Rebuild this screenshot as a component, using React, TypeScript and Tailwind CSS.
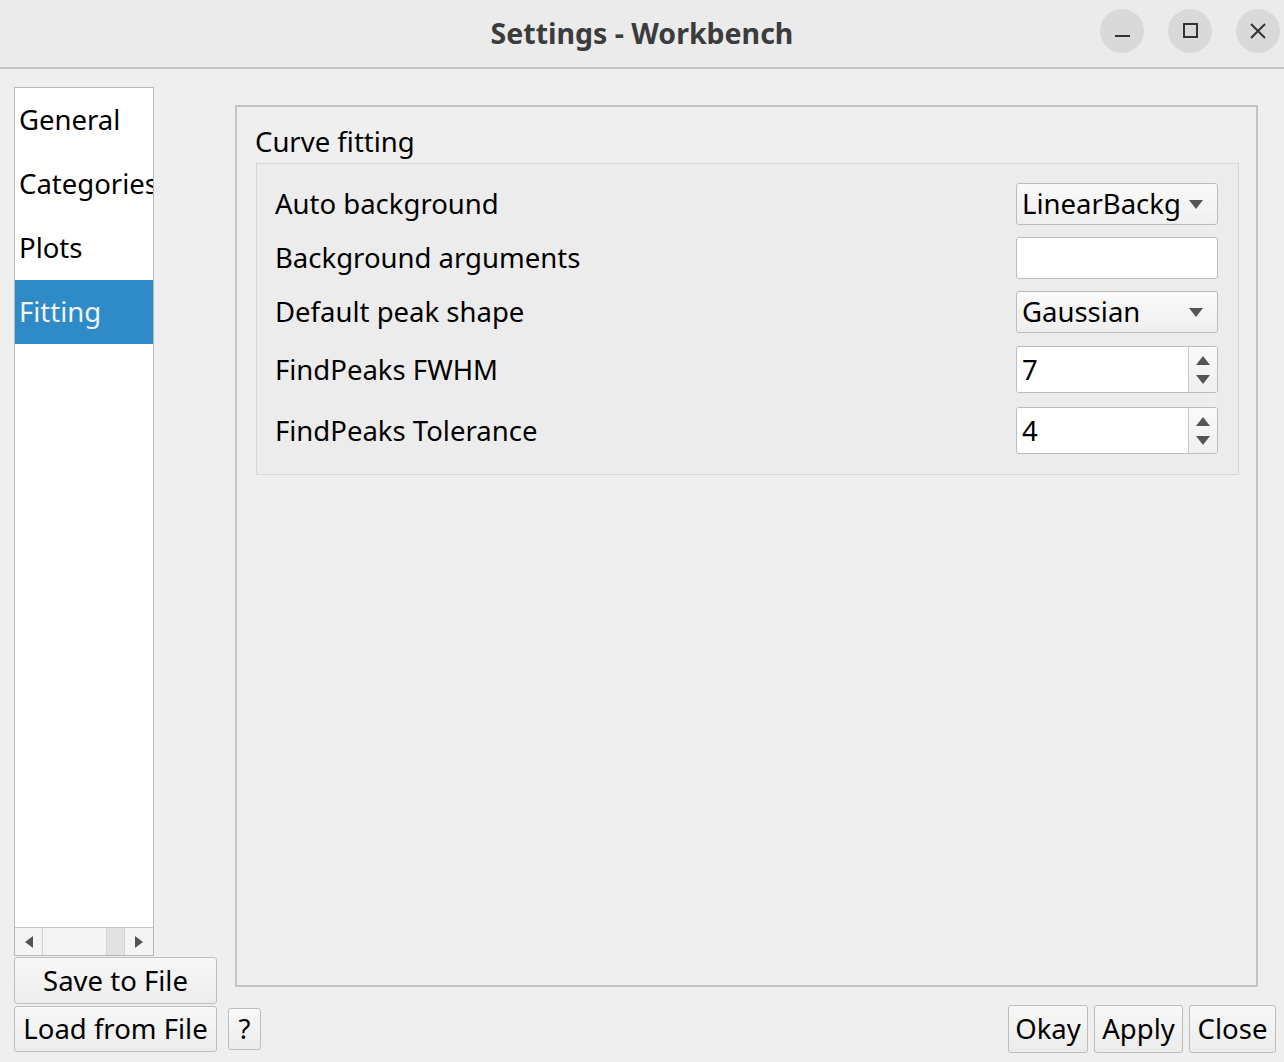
import { ReactNode } from 'react'

const FONT = { fontFamily: '"Noto Sans", "DejaVu Sans", sans-serif' }

function Btn({ children, className }: { children: ReactNode; className: string }) {
  return (
    <button
      className={`flex items-center justify-center rounded-[3px] border border-[#bdbdbd] bg-gradient-to-b from-[#f8f8f8] to-[#ececec] text-[27.5px] leading-none text-black ${className}`}
    >
      {children}
    </button>
  )
}

function Arrow({ up, className }: { up?: boolean; className?: string }) {
  return (
    <svg width="14" height="9" viewBox="0 0 14 9" className={className}>
      <path d={up ? 'M0 9 L7 0 L14 9 Z' : 'M0 0 L14 0 L7 9 Z'} fill="#555" />
    </svg>
  )
}

function Combo({ value }: { value: string }) {
  return (
    <div className="flex h-[42px] w-[202px] items-center overflow-hidden rounded-[3px] border border-[#bdbdbd] bg-gradient-to-b from-[#fafafa] to-[#efefef] pl-[5px] pr-[14px]">
      <span className="mr-[8px] flex-1 overflow-hidden whitespace-nowrap text-[27.5px] text-black">{value}</span>
      <Arrow className="shrink-0" />
    </div>
  )
}

function Spin({ value }: { value: string }) {
  return (
    <div className="flex h-[47px] w-[202px] overflow-hidden rounded-[3px] border border-[#bdbdbd] bg-white">
      <span className="flex flex-1 items-center pl-[5px] text-[27.5px] text-black">{value}</span>
      <div className="flex w-[29px] flex-col items-center justify-center gap-[10px] border-l border-[#c8c8c8] bg-gradient-to-b from-[#fafafa] to-[#efefef]">
        <Arrow up />
        <Arrow />
      </div>
    </div>
  )
}

function Row({ label, children }: { label: string; children: ReactNode }) {
  return (
    <div className="flex items-center justify-between">
      <span className="text-[27.5px] text-black">{label}</span>
      {children}
    </div>
  )
}

export default function App() {
  const items = ['General', 'Categories', 'Plots', 'Fitting']
  return (
    <div className="flex h-[1062px] w-[1284px] flex-col overflow-hidden bg-[#efefef]" style={FONT}>
      {/* title bar */}
      <div className="grid h-[69px] grid-cols-[1fr_auto_1fr] items-center border-b-2 border-[#c6c6c6] bg-[#ebebeb]">
        <div />
        <div className="text-[28.5px] font-bold text-[#3c3c3c]">Settings - Workbench</div>
        <div className="flex justify-end gap-[24px] pb-[6px] pr-[4px]">
          <div className="flex h-[44px] w-[44px] items-center justify-center rounded-full bg-[#d9d9d9]">
            <div className="mt-[10px] h-[2px] w-[15px] bg-[#333]" />
          </div>
          <div className="flex h-[44px] w-[44px] items-center justify-center rounded-full bg-[#d9d9d9]">
            <div className="h-[15px] w-[15px] border-2 border-[#333]" />
          </div>
          <div className="flex h-[44px] w-[44px] items-center justify-center rounded-full bg-[#d9d9d9]">
            <svg width="16" height="16" viewBox="0 0 16 16">
              <path d="M1 1 L15 15 M15 1 L1 15" stroke="#333" strokeWidth="2" />
            </svg>
          </div>
        </div>
      </div>

      <div className="flex pl-[14px]">
        {/* left column */}
        <div className="flex w-[203px] flex-col pt-[18px]">
          <div className="flex h-[869px] w-[140px] flex-col border border-[#b8b8b8] bg-white">
            <div className="flex-1 overflow-hidden">
              {items.map((it) => (
                <div
                  key={it}
                  className={`flex h-[64px] items-center whitespace-nowrap pl-[4px] text-[27.5px] ${
                    it === 'Fitting' ? 'bg-[#2f8bc7] text-[#eef4fa]' : 'text-black'
                  }`}
                >
                  {it}
                </div>
              ))}
            </div>
            <div className="flex h-[28px] border-t border-[#c8c8c8] bg-[#f4f4f4]">
              <div className="flex w-[28px] items-center justify-center border-r border-[#d0d0d0]">
                <svg width="8" height="12" viewBox="0 0 8 12">
                  <path d="M8 0 L0 6 L8 12 Z" fill="#555" />
                </svg>
              </div>
              <div className="flex-1" />
              <div className="w-[19px] border-x border-[#d4d4d4] bg-[#e2e2e2]" />
              <div className="flex w-[28px] items-center justify-center">
                <svg width="8" height="12" viewBox="0 0 8 12">
                  <path d="M0 0 L8 6 L0 12 Z" fill="#555" />
                </svg>
              </div>
            </div>
          </div>
          <Btn className="mt-px h-[47px] w-[203px]">Save to File</Btn>
        </div>

        {/* settings panel */}
        <div className="ml-[18px] mt-[36px] flex h-[882px] w-[1023px] flex-col border-2 border-[#c4c4c4] pl-[18px] pr-[17px]">
          <div className="pt-[18px] text-[27.5px] leading-[34px] text-black">Curve fitting</div>
          <div className="ml-px mt-[4px] flex flex-col border border-[#d6d6d6] bg-[#ececec] pb-[20px] pl-[18px] pr-[20px] pt-[19px]">
            <Row label="Auto background">
              <Combo value="LinearBackground" />
            </Row>
            <div className="mt-[12px]">
              <Row label="Background arguments">
                <div className="h-[42px] w-[202px] rounded-[3px] border border-[#bdbdbd] bg-white" />
              </Row>
            </div>
            <div className="mt-[12px]">
              <Row label="Default peak shape">
                <Combo value="Gaussian" />
              </Row>
            </div>
            <div className="mt-[13px]">
              <Row label="FindPeaks FWHM">
                <Spin value="7" />
              </Row>
            </div>
            <div className="mt-[14px]">
              <Row label="FindPeaks Tolerance">
                <Spin value="4" />
              </Row>
            </div>
          </div>
        </div>
      </div>

      {/* bottom row */}
      <div className="mt-[1px] flex items-center pl-[14px] pr-[8px]">
        <Btn className="h-[46px] w-[203px]">Load from File</Btn>
        <Btn className="ml-[11px] h-[42px] w-[33px]">?</Btn>
        <div className="flex-1" />
        <div className="flex gap-[6px]">
          <Btn className="h-[48px] w-[80px]">Okay</Btn>
          <Btn className="h-[48px] w-[89px]">Apply</Btn>
          <Btn className="h-[48px] w-[87px]">Close</Btn>
        </div>
      </div>
    </div>
  )
}
